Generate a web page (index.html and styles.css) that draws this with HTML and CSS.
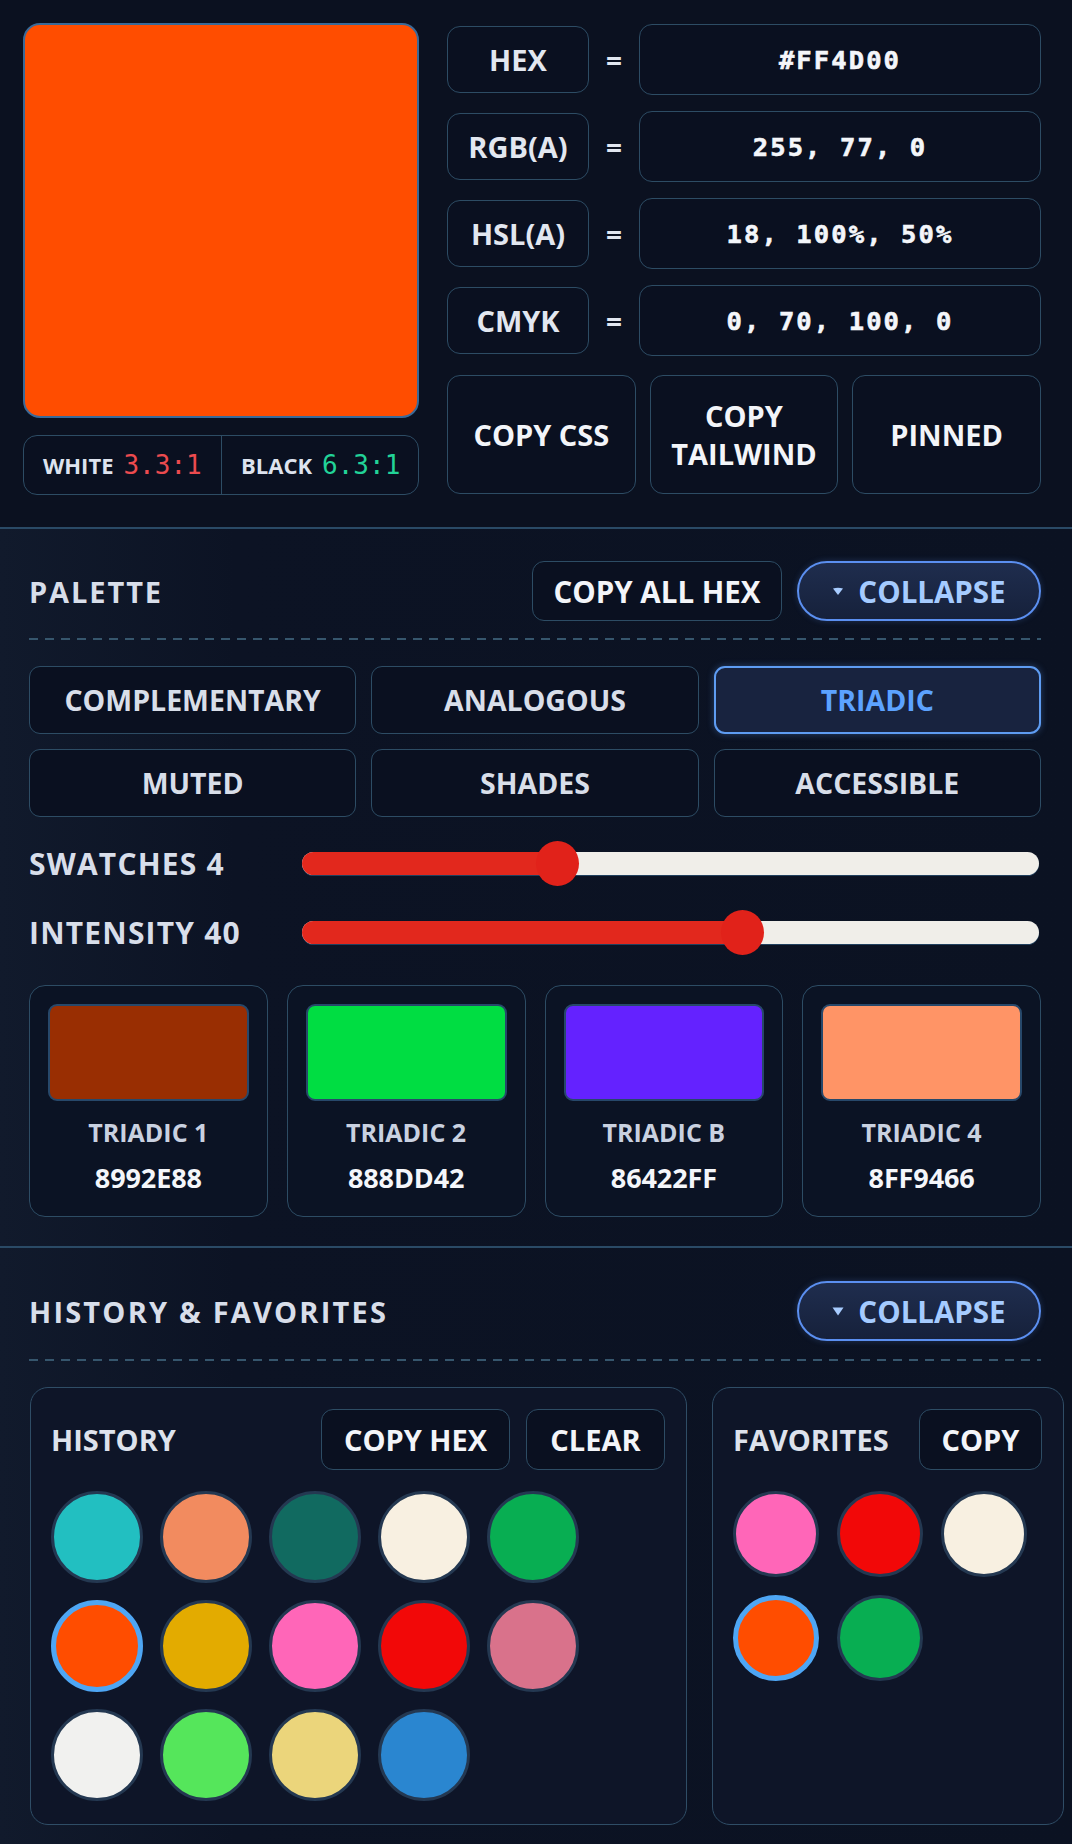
FILE: index.html
```html
<!DOCTYPE html>
<html lang="en">
<head>
<meta charset="utf-8">
<title>Color Tool</title>
<link rel="stylesheet" href="styles.css">
</head>
<body>
<div class="app">
  <section class="top">
    <div class="preview-col">
      <div class="preview"></div>
      <div class="contrast">
        <div class="ccell"><span class="clabel">WHITE</span><span class="ratio bad">3.3:1</span></div>
        <div class="ccell"><span class="clabel">BLACK</span><span class="ratio good">6.3:1</span></div>
      </div>
    </div>
    <div class="formats">
      <div class="frow"><div class="flabel">HEX</div><div class="eq">=</div><div class="fval">#FF4D00</div></div>
      <div class="frow"><div class="flabel">RGB(A)</div><div class="eq">=</div><div class="fval">255, 77, 0</div></div>
      <div class="frow"><div class="flabel">HSL(A)</div><div class="eq">=</div><div class="fval">18, 100%, 50%</div></div>
      <div class="frow"><div class="flabel">CMYK</div><div class="eq">=</div><div class="fval">0, 70, 100, 0</div></div>
      <div class="actions">
        <button class="btn big">COPY CSS</button>
        <button class="btn big">COPY<br>TAILWIND</button>
        <button class="btn big">PINNED</button>
      </div>
    </div>
  </section>

  <section class="sec palette">
    <div class="sec-head">
      <h2 class="sec-title">PALETTE</h2>
      <div class="head-actions">
        <button class="btn hbtn copyall">COPY ALL HEX</button>
        <button class="pill"><svg class="tri" width="12" height="9" viewBox="0 0 12 9"><path d="M1 1.5 Q6 0 11 1.5 L6 8 Z" fill="#a8ccff"/></svg>COLLAPSE</button>
      </div>
    </div>
    <div class="dash"></div>
    <div class="tabs">
      <button class="btn tab">COMPLEMENTARY</button>
      <button class="btn tab">ANALOGOUS</button>
      <button class="btn tab active">TRIADIC</button>
      <button class="btn tab">MUTED</button>
      <button class="btn tab">SHADES</button>
      <button class="btn tab">ACCESSIBLE</button>
    </div>
    <div class="sliders">
      <div class="srow">
        <div class="slabel">SWATCHES 4</div>
        <div class="track"><div class="fill" style="width:34.6%"></div><div class="thumb" style="left:34.6%"></div></div>
      </div>
      <div class="srow">
        <div class="slabel">INTENSITY 40</div>
        <div class="track"><div class="fill" style="width:59.7%"></div><div class="thumb" style="left:59.7%"></div></div>
      </div>
    </div>
    <div class="cards">
      <div class="card"><div class="chip" style="background:#992e02"></div><div class="cname">TRIADIC 1</div><div class="chex">8992E88</div></div>
      <div class="card"><div class="chip" style="background:#00dd42"></div><div class="cname">TRIADIC 2</div><div class="chex">888DD42</div></div>
      <div class="card"><div class="chip" style="background:#6422ff"></div><div class="cname">TRIADIC B</div><div class="chex">86422FF</div></div>
      <div class="card"><div class="chip" style="background:#ff9466"></div><div class="cname">TRIADIC 4</div><div class="chex">8FF9466</div></div>
    </div>
  </section>

  <section class="sec history">
    <div class="sec-head">
      <h2 class="sec-title">HISTORY &amp; FAVORITES</h2>
      <div class="head-actions">
        <button class="pill"><svg class="tri" width="12" height="9" viewBox="0 0 12 9"><path d="M0.5 0.5 L11.5 0.5 L6 8.5 Z" fill="#a8ccff"/></svg>COLLAPSE</button>
      </div>
    </div>
    <div class="dash"></div>
    <div class="boards">
      <div class="board hist">
        <div class="bhead">
          <h3 class="btitle">HISTORY</h3>
          <div class="bbtns">
            <button class="btn sbtn copyhex">COPY HEX</button>
            <button class="btn sbtn clear">CLEAR</button>
          </div>
        </div>
        <div class="dots hdots">
          <span class="dot" style="background:#22bfc1"></span>
          <span class="dot" style="background:#f28b5f"></span>
          <span class="dot" style="background:#116a60"></span>
          <span class="dot" style="background:#f8f0e1"></span>
          <span class="dot" style="background:#08ae52"></span>
          <span class="dot sel" style="background:#ff4d00"></span>
          <span class="dot" style="background:#e3ab00"></span>
          <span class="dot" style="background:#ff66b8"></span>
          <span class="dot" style="background:#f20808"></span>
          <span class="dot" style="background:#d9728b"></span>
          <span class="dot" style="background:#f1f1ef"></span>
          <span class="dot" style="background:#55e65b"></span>
          <span class="dot" style="background:#ebd57b"></span>
          <span class="dot" style="background:#2a86d0"></span>
        </div>
      </div>
      <div class="board fav">
        <div class="bhead">
          <h3 class="btitle">FAVORITES</h3>
          <div class="bbtns">
            <button class="btn sbtn copy">COPY</button>
          </div>
        </div>
        <div class="dots fdots">
          <span class="dot" style="background:#ff66b8"></span>
          <span class="dot" style="background:#f20808"></span>
          <span class="dot" style="background:#f8f0e1"></span>
          <span class="dot sel" style="background:#ff4d00"></span>
          <span class="dot" style="background:#08ae52"></span>
        </div>
      </div>
    </div>
  </section>
</div>
</body>
</html>
```

FILE: styles.css
```css
* { box-sizing: border-box; }

html, body {
  margin: 0;
  padding: 0;
  background: #0b1120;
}

body {
  font-family: "Open Sans", "Noto Sans", sans-serif;
  color: #e8ecf3;
  width: 1072px;
  min-height: 1844px;
}

.app {
  width: 1072px;
  overflow: hidden;
}

button {
  font-family: inherit;
  margin: 0;
  cursor: pointer;
}

.btn {
  background: #0a1020;
  border: 1.5px solid #2d4c64;
  border-radius: 12px;
  color: #f3f5f9;
  font-weight: 700;
  display: flex;
  align-items: center;
  justify-content: center;
  text-align: center;
  padding: 0;
  white-space: nowrap;
}

/* ---------- TOP ---------- */
.top {
  display: flex;
  gap: 28px;
  padding: 23px 31px 32px 23px;
  background: #0b1120;
  border-bottom: 2px solid #2a4a66;
}

.preview-col {
  width: 396px;
  display: flex;
  flex-direction: column;
  gap: 17px;
}

.preview {
  width: 396px;
  height: 395px;
  background: #ff4d00;
  border: 2px solid #3a6a98;
  border-radius: 17px;
}

.contrast {
  height: 60px;
  display: grid;
  grid-template-columns: 1fr 1fr;
  border: 1.5px solid #2d4c64;
  border-radius: 14px;
  background: #0a1020;
}

.ccell {
  display: flex;
  align-items: center;
  gap: 10px;
  padding-left: 19px;
}

.ccell + .ccell {
  border-left: 1.5px solid #2d4c64;
}

.clabel {
  font-size: 22px;
  font-weight: 700;
  color: #dde3ee;
}

.ratio {
  font-family: "DejaVu Sans Mono", "Liberation Mono", monospace;
  font-size: 26px;
  font-weight: 400;
}

.ratio.bad { color: #ec4b4f; }
.ratio.good { color: #22d398; }

.formats {
  flex: 1;
  display: flex;
  flex-direction: column;
  gap: 17px;
  padding-top: 1px;
}

.frow {
  display: grid;
  grid-template-columns: 142px 50px 1fr;
  align-items: center;
  height: 70px;
}

.flabel {
  height: 67px;
  border: 1.5px solid #2d4c64;
  border-radius: 13px;
  background: #0a1020;
  display: flex;
  align-items: center;
  justify-content: center;
  font-size: 29px;
  font-weight: 700;
  color: #e2e7f0;
}

.eq {
  text-align: center;
  font-size: 28px;
  font-weight: 700;
  color: #e2e7f0;
}

.fval {
  height: 71px;
  border: 1.5px solid #2d4c64;
  border-radius: 13px;
  background: #0a1020;
  display: flex;
  align-items: center;
  justify-content: center;
  font-family: "DejaVu Sans Mono", "Liberation Mono", monospace;
  font-size: 25.5px;
  font-weight: 700;
  letter-spacing: 2.1px;
  color: #f4f6fa;
  -webkit-text-stroke: 0.6px #f4f6fa;
}

.actions {
  margin-top: 3px;
  display: grid;
  grid-template-columns: repeat(3, 1fr);
  gap: 14px;
  height: 119px;
}

.btn.big {
  font-size: 29px;
  line-height: 38px;
  border-radius: 13px;
}

/* ---------- SECTIONS ---------- */
.sec {
  padding: 32px 31px 29px 29px;
  background: linear-gradient(90deg, #111a2c 0%, #0c1324 22%, #0b1222 100%);
  border-bottom: 2px solid #2a4a66;
}

.sec.history {
  border-bottom: none;
  padding-bottom: 19px;
  padding-top: 33px;
}

.sec-head {
  display: flex;
  align-items: center;
  justify-content: space-between;
  height: 60px;
}

.sec-title {
  margin: 0;
  font-size: 29px;
  font-weight: 700;
  color: #d8deea;
  letter-spacing: 1.9px;
}

.history .sec-title { letter-spacing: 2.2px; }

.head-actions {
  display: flex;
  gap: 15px;
}

.hbtn {
  height: 60px;
  font-size: 29.5px;
}

.copyall { width: 250px; }

.pill {
  width: 244px;
  height: 60px;
  border-radius: 30px;
  border: 2px solid #5b8ff0;
  background: linear-gradient(180deg, #1f2d4e 0%, #16213b 100%);
  color: #a5cbff;
  font-size: 29.5px;
  font-weight: 700;
  display: flex;
  align-items: center;
  justify-content: center;
  gap: 14px;
  box-shadow: 0 0 6px rgba(91, 143, 240, 0.25);
}

.tri { display: block; }

.dash {
  height: 2px;
  margin-top: 17px;
  background: repeating-linear-gradient(90deg, #36566d 0 9px, transparent 9px 16px);
}

.history .dash { margin-top: 18px; }

/* tabs */
.tabs {
  margin-top: 26px;
  display: grid;
  grid-template-columns: repeat(3, 1fr);
  grid-auto-rows: 68px;
  gap: 15px;
}

.tab {
  font-size: 28.5px;
  border-radius: 11px;
  color: #d8dee9;
}

.tab.active {
  background: #18233f;
  border: 2px solid #5e9cf2;
  color: #5ca2ff;
  box-shadow: 0 0 7px rgba(94, 156, 242, 0.35);
}

/* sliders */
.sliders {
  margin-top: 24px;
  display: flex;
  flex-direction: column;
  gap: 25px;
}

.srow {
  display: grid;
  grid-template-columns: 273px 1fr;
  align-items: center;
  height: 44px;
  padding-right: 2px;
}

.slabel {
  font-size: 30px;
  font-weight: 700;
  color: #d8deea;
  letter-spacing: 1.2px;
  white-space: nowrap;
}

.track {
  position: relative;
  height: 23px;
  border-radius: 12px;
  background: #f0eee9;
  box-shadow: 0 1px 0 #21405e;
}

.fill {
  height: 100%;
  border-radius: 12px 0 0 12px;
  background: #e2281d;
}

.thumb {
  position: absolute;
  top: 50%;
  width: 43px;
  height: 45px;
  margin-left: -21px;
  margin-top: -22px;
  border-radius: 50%;
  background: #e1221a;
}

/* cards */
.cards {
  margin-top: 31px;
  display: grid;
  grid-template-columns: repeat(4, 1fr);
  gap: 19px;
}

.card {
  height: 232px;
  border: 1.5px solid #2d4c64;
  border-radius: 16px;
  background: #0b1324;
  padding: 18px 18px 0;
  display: flex;
  flex-direction: column;
  align-items: center;
}

.chip {
  width: 100%;
  height: 97px;
  border-radius: 9px;
  border: 2px solid #27486a;
}

.cname {
  margin-top: 15px;
  font-size: 25px;
  font-weight: 700;
  color: #c9d1e0;
  line-height: 32px;
}

.chex {
  margin-top: 13px;
  font-size: 27px;
  font-weight: 700;
  color: #f4f6fa;
  line-height: 34px;
  letter-spacing: -0.1px;
}

/* boards */
.boards {
  margin-top: 26px;
  margin-left: 1px;
  display: grid;
  grid-template-columns: 657px 352px;
  gap: 25px;
  width: 1034px;
}

.board {
  height: 438px;
  border: 1.5px solid #2f4d66;
  border-radius: 18px;
  background: #0e1528;
  padding: 21px 21px 0 20px;
}

.bhead {
  display: flex;
  align-items: center;
  justify-content: space-between;
  height: 61px;
}

.btitle {
  margin: 0;
  font-size: 29px;
  font-weight: 700;
  color: #dde2ec;
}

.bbtns {
  display: flex;
  gap: 16px;
}

.sbtn {
  height: 61px;
  font-size: 29px;
}

.copyhex { width: 189px; }
.clear { width: 139px; }
.copy { width: 123px; }

.dots {
  margin-top: 21px;
  display: grid;
}

.hdots {
  grid-template-columns: repeat(5, 92px);
  grid-auto-rows: 92px;
  column-gap: 17px;
  row-gap: 17px;
}

.fdots {
  grid-template-columns: repeat(3, 86px);
  grid-auto-rows: 86px;
  gap: 18px;
}

.dot {
  display: block;
  border-radius: 50%;
  border: 3px solid #243851;
}

.dot.sel {
  border: 5px solid #4ea6f4;
}
```
